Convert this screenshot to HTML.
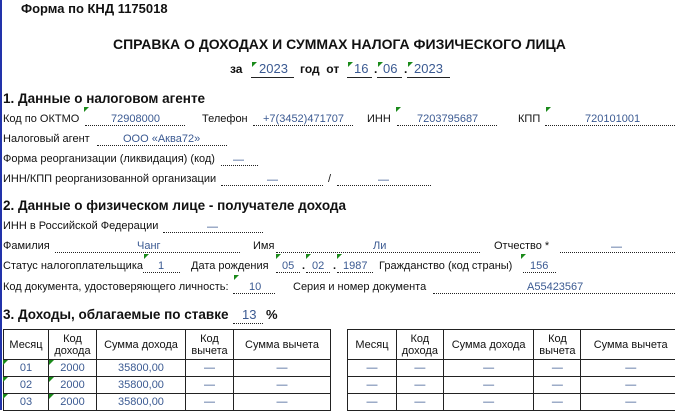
<!DOCTYPE html>
<html><head><meta charset="utf-8"><style>
*{margin:0;padding:0;box-sizing:border-box}
body{width:675px;height:410px;overflow:hidden;background:#fff;font-family:"Liberation Sans",Arial,sans-serif;font-size:11px;color:#111;position:relative}
.a{position:absolute;white-space:nowrap}
.b{font-weight:bold}
.h{font-weight:bold;font-size:13.5px}
.v{color:#3b5a92}
.d{position:absolute;border-bottom:1px dotted #222;height:1px}
.s{position:absolute;border-bottom:1px solid #222;height:1px}
.g{position:absolute;width:0;height:0;border-top:5px solid #1a8a1a;border-right:5px solid transparent}
table{position:absolute;border-collapse:collapse;font-size:11px}
td{border:1px solid #222;text-align:center;padding:0;line-height:12px}
td.v{color:#3b5a92}
</style></head><body>
<div style="position:absolute;left:0;top:0;width:2px;height:410px;background:#2233aa"></div>

<div class="a b" style="left:21px;top:1px;font-size:13px">Форма по КНД 1175018</div>
<div class="a b" style="left:113px;top:36px;font-size:14px">СПРАВКА О ДОХОДАХ И СУММАХ НАЛОГА ФИЗИЧЕСКОГО ЛИЦА</div>
<div class="a b" style="left:230px;top:62px;font-size:12px">за</div>
<div class="s" style="left:251px;top:77px;width:43px"></div><div class="g" style="left:252px;top:62px"></div>
<div class="a v" style="left:259px;top:61px;font-size:13px">2023</div>
<div class="a b" style="left:300px;top:62px;font-size:12px">год &nbsp;от</div>
<div class="s" style="left:347px;top:77px;width:25px"></div><div class="g" style="left:348px;top:62px"></div>
<div class="a v" style="left:354px;top:61px;font-size:13px">16</div>
<div class="a b" style="left:374px;top:62px;font-size:12px">.</div>
<div class="s" style="left:377px;top:77px;width:25px"></div><div class="g" style="left:378px;top:62px"></div>
<div class="a v" style="left:383px;top:61px;font-size:13px">06</div>
<div class="a b" style="left:404px;top:62px;font-size:12px">.</div>
<div class="s" style="left:407px;top:77px;width:43px"></div><div class="g" style="left:408px;top:62px"></div>
<div class="a v" style="left:414px;top:61px;font-size:13px">2023</div>

<div class="a h" style="left:3px;top:91px">1. Данные о налоговом агенте</div>
<div class="a" style="left:3px;top:113px">Код по ОКТМО</div>
<div class="d" style="left:85px;top:125px;width:100px"></div><div class="g" style="left:84px;top:107px"></div>
<div class="a v" style="left:111px;top:113px">72908000</div>
<div class="a" style="left:202px;top:113px">Телефон</div>
<div class="d" style="left:253px;top:125px;width:100px"></div>
<div class="a v" style="left:263px;top:113px">+7(3452)471707</div>
<div class="a" style="left:367px;top:113px">ИНН</div>
<div class="d" style="left:397px;top:125px;width:100px"></div><div class="g" style="left:396px;top:107px"></div>
<div class="a v" style="left:417px;top:113px">7203795687</div>
<div class="a" style="left:518px;top:113px">КПП</div>
<div class="d" style="left:545px;top:125px;width:130px"></div><div class="g" style="left:546px;top:107px"></div>
<div class="a v" style="left:585px;top:113px">720101001</div>

<div class="a" style="left:3px;top:133px">Налоговый агент</div>
<div class="d" style="left:97px;top:145px;width:130px"></div>
<div class="a v" style="left:123px;top:133px">ООО «Аква72»</div>
<div class="a" style="left:3px;top:153px">Форма реорганизации (ликвидация) (код)</div>
<div class="d" style="left:221px;top:165px;width:37px"></div>
<div class="a v" style="left:233px;top:154px">—</div>
<div class="a" style="left:3px;top:173px">ИНН/КПП реорганизованной организации</div>
<div class="d" style="left:221px;top:185px;width:102px"></div>
<div class="a v" style="left:267px;top:174px">—</div>
<div class="a" style="left:328px;top:173px">/</div>
<div class="d" style="left:337px;top:185px;width:94px"></div>
<div class="a v" style="left:378px;top:174px">—</div>

<div class="a h" style="left:3px;top:198px">2. Данные о физическом лице - получателе дохода</div>
<div class="a" style="left:3px;top:220px">ИНН в Российской Федерации</div>
<div class="d" style="left:163px;top:232px;width:100px"></div>
<div class="a v" style="left:207px;top:221px">—</div>
<div class="a" style="left:3px;top:240px">Фамилия</div>
<div class="d" style="left:55px;top:252px;width:185px"></div>
<div class="a v" style="left:137px;top:240px">Чанг</div>
<div class="a" style="left:253px;top:240px">Имя</div>
<div class="d" style="left:276px;top:252px;width:204px"></div>
<div class="a v" style="left:373px;top:240px">Ли</div>
<div class="a" style="left:494px;top:240px">Отчество *</div>
<div class="d" style="left:560px;top:252px;width:115px"></div>
<div class="a v" style="left:611px;top:241px">—</div>

<div class="a" style="left:3px;top:260px">Статус налогоплательщика</div>
<div class="d" style="left:143px;top:272px;width:37px"></div><div class="g" style="left:144px;top:254px"></div>
<div class="a v" style="left:158px;top:260px">1</div>
<div class="a" style="left:191px;top:260px">Дата рождения</div>
<div class="d" style="left:276px;top:272px;width:24px"></div><div class="g" style="left:276px;top:254px"></div>
<div class="a v" style="left:282px;top:260px">05</div>
<div class="a b" style="left:302px;top:260px">.</div>
<div class="d" style="left:306px;top:272px;width:24px"></div><div class="g" style="left:306px;top:254px"></div>
<div class="a v" style="left:312px;top:260px">02</div>
<div class="a b" style="left:333px;top:260px">.</div>
<div class="d" style="left:337px;top:272px;width:36px"></div><div class="g" style="left:337px;top:254px"></div>
<div class="a v" style="left:343px;top:260px">1987</div>
<div class="a" style="left:379px;top:260px">Гражданство (код страны)</div>
<div class="d" style="left:523px;top:272px;width:33px"></div><div class="g" style="left:521px;top:254px"></div>
<div class="a v" style="left:530px;top:260px">156</div>

<div class="a" style="left:3px;top:281px">Код документа, удостоверяющего личность:</div>
<div class="d" style="left:233px;top:293px;width:42px"></div><div class="g" style="left:234px;top:275px"></div>
<div class="a v" style="left:249px;top:281px">10</div>
<div class="a" style="left:293px;top:281px">Серия и номер документа</div>
<div class="d" style="left:433px;top:293px;width:242px"></div>
<div class="a v" style="left:527px;top:281px">A55423567</div>

<div class="a h" style="left:3px;top:307px">3. Доходы, облагаемые по ставке</div>
<div class="d" style="left:233px;top:323px;width:30px"></div>
<div class="a v" style="left:242px;top:307px;font-size:13px">13</div>
<div class="a b" style="left:266px;top:307px;font-size:13px">%</div>

<table style="left:3px;top:329px;width:328px">
<colgroup><col style="width:45px"><col style="width:48px"><col style="width:89px"><col style="width:48px"><col style="width:97px"></colgroup>
<tr style="height:30px"><td>Месяц</td><td>Код<br>дохода</td><td>Сумма дохода</td><td>Код<br>вычета</td><td>Сумма вычета</td></tr>
<tr style="height:17px"><td class="v">01</td><td class="v">2000</td><td class="v">35800,00</td><td class="v">—</td><td class="v">—</td></tr>
<tr style="height:17px"><td class="v">02</td><td class="v">2000</td><td class="v">35800,00</td><td class="v">—</td><td class="v">—</td></tr>
<tr style="height:17px"><td class="v">03</td><td class="v">2000</td><td class="v">35800,00</td><td class="v">—</td><td class="v">—</td></tr>
</table>
<div class="g" style="left:3px;top:360px"></div><div class="g" style="left:49px;top:360px"></div>
<div class="g" style="left:3px;top:377px"></div><div class="g" style="left:49px;top:377px"></div>
<div class="g" style="left:3px;top:394px"></div><div class="g" style="left:49px;top:394px"></div>

<table style="left:347px;top:329px;width:334px">
<colgroup><col style="width:49px"><col style="width:47px"><col style="width:91px"><col style="width:47px"><col style="width:100px"></colgroup>
<tr style="height:30px"><td>Месяц</td><td>Код<br>дохода</td><td>Сумма дохода</td><td>Код<br>вычета</td><td>Сумма вычета</td></tr>
<tr style="height:17px"><td class="v">—</td><td class="v">—</td><td class="v">—</td><td class="v">—</td><td class="v">—</td></tr>
<tr style="height:17px"><td class="v">—</td><td class="v">—</td><td class="v">—</td><td class="v">—</td><td class="v">—</td></tr>
<tr style="height:17px"><td class="v">—</td><td class="v">—</td><td class="v">—</td><td class="v">—</td><td class="v">—</td></tr>
</table>
</body></html>
